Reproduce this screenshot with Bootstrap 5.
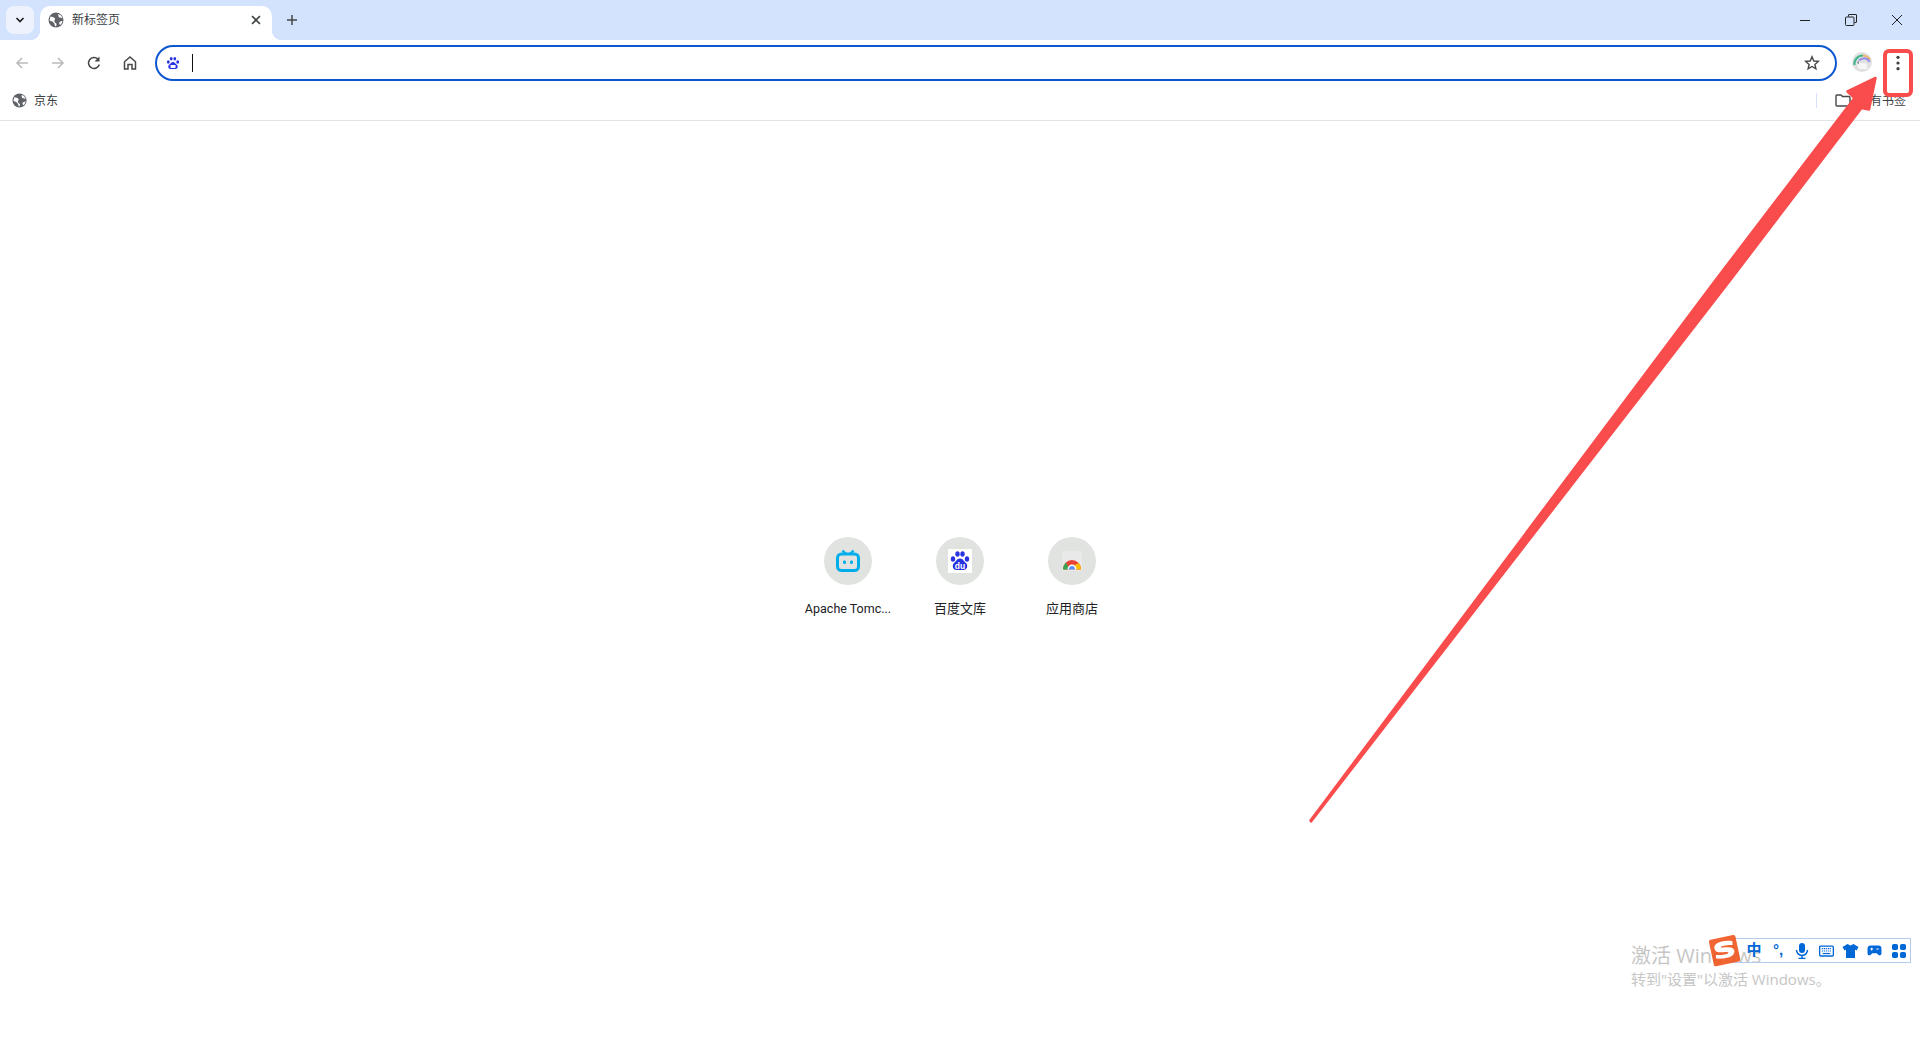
<!DOCTYPE html>
<html lang="zh">
<head>
<meta charset="utf-8">
<title>新标签页</title>
<link href="https://cdn.jsdelivr.net/npm/bootstrap@5.3.0/dist/css/bootstrap.min.css" rel="stylesheet">
<style>
html,body{height:100%;}
body{margin:0;background:#fff;overflow:hidden;font-family:"Liberation Sans","Noto Sans CJK SC",sans-serif;position:relative;}
.tabstrip{height:40px;background:#d3e3fd;padding-left:6px;}
.tabmenu{width:28px;height:28px;border-radius:8px;background:#edf2fc;margin-top:6px;}
.tabitem{width:232px;height:34px;margin-top:6px;margin-left:6px;background:#fff;border-radius:10px 10px 0 0;position:relative;padding:0 8px 6px 8px;font-size:12px;color:#3c4043;}
.tabitem::before,.tabitem::after{content:"";position:absolute;bottom:0;width:10px;height:10px;}
.tabitem::before{left:-10px;background:radial-gradient(circle at 0 0,transparent 10px,#fff 10.5px);}
.tabitem::after{right:-10px;background:radial-gradient(circle at 100% 0,transparent 10px,#fff 10.5px);}
.tabtitle{margin-left:8px;}
.plusbtn{margin-left:6px;margin-top:6px;width:28px;height:28px;}
.winbtns{margin-left:auto;}
.winbtn{width:46px;height:40px;}
.toolbar{height:45px;background:#fff;border-radius:10px 10px 0 0;padding-left:4px;}
.navbtn{width:36px;height:36px;}
.omnibox{width:1682px;height:36px;margin-left:7px;border:2.5px solid #0b57d0;border-radius:18px;padding:0 15px 0 9px;flex:none;}
.caretbar{width:1px;height:18px;background:#111;margin-left:12px;}
.avatarbox{margin-left:15px;margin-bottom:2px;line-height:0;}
.dotsbox{margin-left:18px;line-height:0;}
.bookmarks{height:36px;border-bottom:1px solid #e1e3e6;padding:0 14px 4px 12px;font-size:12px;color:#3c4043;}
.bmsep{width:1px;height:15px;background:#d6e2f8;margin-left:auto;margin-right:18px;}
.bmlabel{margin-left:7px;}
.ntpmain{height:879px;position:relative;}
.tiles{padding-top:416px;}
.tiletile{width:112px;}
.tilecircle{width:48px;height:48px;border-radius:50%;background:#e1e3e1;}
.tilelabel{font-family:Roboto,"Noto Sans CJK SC",sans-serif;font-size:13px;color:#202124;margin-top:15px;line-height:18px;text-align:center;}
.tilelatin{font-size:12.5px;}
.arrowlayer{position:absolute;left:0;top:0;pointer-events:none;}
.redbox{position:absolute;left:1883px;top:49px;width:30px;height:48px;border:4px solid #f94c4c;border-radius:6px;}
.wm{position:absolute;left:1631px;top:946px;color:#c6c6c6;line-height:1;font-family:"Open Sans","Noto Sans CJK SC",sans-serif;}
.wm1{font-size:20px;}
.wm2{font-size:15px;margin-top:6px;}
.imebar{position:absolute;left:1733px;top:938px;width:178px;height:25px;border:1px solid #b4cbee;padding-left:8px;}
.imecell{width:24.1px;height:23px;color:#0067d6;font-size:15px;font-weight:700;flex:none;}
.imelogo{position:absolute;left:1708px;top:932px;opacity:.93;}
</style>
</head>
<body>
<div class="tabstrip d-flex">
  <div class="tabmenu d-flex align-items-center justify-content-center">
    <svg width="12" height="12" viewBox="0 0 12 12"><path d="M2.500 4l3.500 3.600L9.500 4" fill="none" stroke="#202124" stroke-width="1.700"/></svg>
  </div>
  <div class="tabitem d-flex align-items-center">
    <svg width="16" height="16" viewBox="0 0 16 16"><circle cx="8" cy="8" r="7.500" fill="#5f6368"/><path d="M2.500 4.500C4 5 6.500 5 7 6.500S5.500 8.500 6.500 10s2 1 2 2.500-.5 1.500-1 2c-1-1.500-1-3-2-4S3 9 1.500 8.500zM10.500 2c-.5 1.500 0 3 1 3.500s2 0 3 1c-.3-2-2-4-4-4.500zM11.500 10c1-.7 2-1 3-1-.3 1.500-1 3-2.500 4-.7-1-1-2.200-.5-3z" fill="#fff"/></svg>
    <span class="tabtitle flex-grow-1">新标签页</span>
    <svg width="16" height="16" viewBox="0 0 16 16"><path d="M4 4l8 8M12 4l-8 8" stroke="#3c4043" stroke-width="1.600"/></svg>
  </div>
  <div class="plusbtn d-flex align-items-center justify-content-center">
    <svg width="14" height="14" viewBox="0 0 14 14"><path d="M7 2v10M2 7h10" stroke="#474747" stroke-width="1.500"/></svg>
  </div>
  <div class="winbtns d-flex">
    <div class="winbtn d-flex align-items-center justify-content-center"><svg width="12" height="12" viewBox="0 0 12 12"><path d="M1 6.500h10" stroke="#222" stroke-width="1"/></svg></div>
    <div class="winbtn d-flex align-items-center justify-content-center"><svg width="12" height="12" viewBox="0 0 12 12"><path d="M3.500 2.500V1a.5.5 0 0 1 .5-.5h7a.5.5 0 0 1 .5.500v7a.5.5 0 0 1-.5.500H9.500" fill="none" stroke="#222"/><rect x=".5" y="3" width="8.500" height="8.500" rx="1" fill="none" stroke="#222"/></svg></div>
    <div class="winbtn d-flex align-items-center justify-content-center"><svg width="12" height="12" viewBox="0 0 12 12"><path d="M1 1l10 10M11 1L1 11" stroke="#222" stroke-width="1"/></svg></div>
  </div>
</div>
<div class="toolbar d-flex align-items-center">
  <div class="navbtn d-flex align-items-center justify-content-center"><svg width="16" height="16" viewBox="0 0 16 16"><path d="M14 8H3M8 3L3 8l5 5" fill="none" stroke="#b9babb" stroke-width="1.500"/></svg></div>
  <div class="navbtn d-flex align-items-center justify-content-center"><svg width="16" height="16" viewBox="0 0 16 16"><path d="M2 8h11M8 3l5 5-5 5" fill="none" stroke="#b9babb" stroke-width="1.500"/></svg></div>
  <div class="navbtn d-flex align-items-center justify-content-center"><svg width="16" height="16" viewBox="0 0 16 16"><path d="M13.300 9.500A5.500 5.500 0 1 1 12 4.200" fill="none" stroke="#474747" stroke-width="1.500"/><path d="M13.500 1.500v5h-5z" fill="#474747"/></svg></div>
  <div class="navbtn d-flex align-items-center justify-content-center"><svg width="16" height="16" viewBox="0 0 16 16"><path d="M2.500 14V6.800L8 2l5.500 4.800V14H10V9.500H6V14z" fill="none" stroke="#474747" stroke-width="1.500"/></svg></div>
  <div class="omnibox d-flex align-items-center">
    <svg width="14" height="14" viewBox="0 0 14 14"><g fill="#2932e1"><ellipse cx="2.300" cy="6" rx="1.400" ry="1.700"/><ellipse cx="5.200" cy="2.700" rx="1.400" ry="1.800"/><ellipse cx="8.800" cy="2.700" rx="1.400" ry="1.800"/><ellipse cx="11.700" cy="6" rx="1.400" ry="1.700"/><path d="M7 6c2 0 2.500 2 4 3 1.500 1.500.5 4-1.500 4H4.500c-2 0-3-2.500-1.500-4C4.500 8 5 6 7 6z"/></g><rect x="4.500" y="9" width="5" height="3" fill="#fff"/></svg>
    <div class="caretbar"></div>
    <svg class="ms-auto" width="16" height="16" viewBox="0 0 16 16"><path d="M8 1.800l1.800 4.200 4.500.4-3.400 3 1 4.400L8 11.500l-3.900 2.300 1-4.400-3.400-3 4.500-.4z" fill="none" stroke="#474747" stroke-width="1.400"/></svg>
  </div>
  <div class="avatarbox">
    <svg width="20" height="20" viewBox="0 0 20 20"><circle cx="10" cy="10" r="10" fill="#dfe1e2"/><g fill="none" stroke-width="2.200"><path d="M2.500 13A8.500 8.500 0 0 1 11 3.500" stroke="#45b58a"/><path d="M11 3.500A8.500 8.500 0 0 1 18 8" stroke="#efb46e"/><path d="M6 12A6 6 0 0 1 17.500 10" stroke="#9a93e6"/></g><path d="M4 10l3-2 1.500 3 6 .5 1 5.500H7z" fill="#f6f6f6"/><path d="M4.500 10.500l2.500-2v4z" fill="#8d9a9c"/></svg>
  </div>
  <div class="dotsbox">
    <svg width="16" height="16" viewBox="0 0 16 16"><g fill="#3c4043"><circle cx="8" cy="2.300" r="1.600"/><circle cx="8" cy="8" r="1.600"/><circle cx="8" cy="13.700" r="1.600"/></g></svg>
  </div>
</div>
<div class="bookmarks d-flex align-items-center">
  <svg width="15" height="15" viewBox="0 0 16 16"><circle cx="8" cy="8" r="7.500" fill="#5f6368"/><path d="M2.500 4.500C4 5 6.500 5 7 6.500S5.500 8.500 6.500 10s2 1 2 2.500-.5 1.500-1 2c-1-1.500-1-3-2-4S3 9 1.500 8.500zM10.500 2c-.5 1.500 0 3 1 3.500s2 0 3 1c-.3-2-2-4-4-4.500zM11.500 10c1-.7 2-1 3-1-.3 1.500-1 3-2.500 4-.7-1-1-2.200-.5-3z" fill="#fff"/></svg>
  <span class="bmlabel">京东</span>
  <div class="bmsep"></div>
  <svg width="16" height="13" viewBox="0 0 16 13"><path d="M1 11V2A1 1 0 0 1 2 1h4l1.500 1.500H14a1 1 0 0 1 1 1V11a1 1 0 0 1-1 1H2a1 1 0 0 1-1-1z" fill="none" stroke="#474747" stroke-width="1.400"/></svg>
  <span class="bmlabel">所有书签</span>
</div>
<main class="ntpmain">
  <div class="tiles d-flex justify-content-center">
    <div class="tiletile d-flex flex-column align-items-center">
      <div class="tilecircle d-flex align-items-center justify-content-center">
        <svg width="24" height="24" viewBox="0 0 24 24"><path d="M6.500 1.500l3.500 3.500M17.500 1.500L14 5" stroke="#00aeec" stroke-width="2.400"/><rect x="1.500" y="5" width="21" height="16.500" rx="4" fill="none" stroke="#00aeec" stroke-width="3"/><rect x="7" y="11.500" width="3" height="3.500" rx="1.200" fill="#00aeec"/><rect x="14" y="11.500" width="3" height="3.500" rx="1.200" fill="#00aeec"/></svg>
      </div>
      <div class="tilelabel tilelatin">Apache Tomc...</div>
    </div>
    <div class="tiletile d-flex flex-column align-items-center">
      <div class="tilecircle d-flex align-items-center justify-content-center">
        <svg width="24" height="24" viewBox="0 0 24 24"><rect width="24" height="24" rx="1" fill="#fff"/><g fill="#2932e1"><ellipse cx="5" cy="10" rx="2.200" ry="2.700"/><ellipse cx="9.500" cy="5" rx="2.200" ry="2.800"/><ellipse cx="14.500" cy="5" rx="2.200" ry="2.800"/><ellipse cx="19" cy="10" rx="2.200" ry="2.700"/><path d="M12 9.500c3 0 4 3 6 4.500 2.500 2.500 1 7-2.500 7h-7C5 21 3.500 16.500 6 14c2-1.500 3-4.500 6-4.500z"/></g><text x="12" y="20" font-size="8.500" font-weight="700" text-anchor="middle" fill="#fff" font-family="Liberation Sans">du</text></svg>
      </div>
      <div class="tilelabel">百度文库</div>
    </div>
    <div class="tiletile d-flex flex-column align-items-center">
      <div class="tilecircle d-flex align-items-center justify-content-center">
        <svg width="24" height="24" viewBox="0 0 24 24"><path d="M2 2h20v20H2z" fill="#e9e9e9"/><path d="M3 20.500a9 9.500 0 0 1 18 0z" fill="#ea4335"/><path d="M3 20.500a9 9.500 0 0 1 3-7l3.500 7z" fill="#34a853"/><path d="M21 20.500a9 9.500 0 0 0-2-6.500l-4.500 2 .5 4.500z" fill="#fbbc05"/><path d="M7.500 20.500a4.500 5 0 0 1 9 0z" fill="#fff"/><path d="M9 20.500a3 3.500 0 0 1 6 0z" fill="#5b8df0"/></svg>
      </div>
      <div class="tilelabel">应用商店</div>
    </div>
  </div>
</main>
<svg class="arrowlayer" width="1920" height="1040" viewBox="0 0 1920 1040">
  <path d="M1310.500 820.500L1311 821.500L1730.400 280L1861.500 108L1869 109.500L1875.500 78L1847.500 91.500L1854.500 98L1715.600 280Z" fill="#f94c4c" stroke="#f94c4c" stroke-width="2.500" stroke-linejoin="round"/>
</svg>
<div class="redbox"></div>
<div class="wm"><div class="wm1">激活 Windows</div><div class="wm2">转到"设置"以激活 Windows。</div></div>
<div class="imebar d-flex align-items-center">
  <div class="imecell d-flex align-items-center justify-content-center">中</div>
  <div class="imecell d-flex align-items-center justify-content-center">°,</div>
  <div class="imecell d-flex align-items-center justify-content-center"><svg width="14" height="16" viewBox="0 0 14 16"><rect x="4" y="0" width="6" height="10" rx="3" fill="#0067d6"/><path d="M1.500 7a5.500 5.500 0 0 0 11 0M7 12.500V16M3.500 15.500h7" fill="none" stroke="#0067d6" stroke-width="1.500"/></svg></div>
  <div class="imecell d-flex align-items-center justify-content-center"><svg width="15" height="12" viewBox="0 0 16 12"><rect x=".7" y=".7" width="14.600" height="10.600" rx="1" fill="none" stroke="#0067d6" stroke-width="1.400"/><path d="M3 3.500h10M3 6h10" stroke="#0067d6" stroke-width="1.300" stroke-dasharray="1.300 .8"/><path d="M4 8.700h8" stroke="#0067d6" stroke-width="1.300"/></svg></div>
  <div class="imecell d-flex align-items-center justify-content-center"><svg width="17" height="14" viewBox="0 0 16 14"><path d="M5 0l3 1.500L11 0l5 3-2 3.500-1.500-1V14h-9V5.500L2 6.500 0 3z" fill="#0067d6"/></svg></div>
  <div class="imecell d-flex align-items-center justify-content-center"><svg width="15" height="13" viewBox="0 0 16 14"><path d="M4 1.500h8a3.500 3.500 0 0 1 3.500 3.500v5.500a2 2 0 0 1-3.500 1L10.500 10h-5L4 11.500a2 2 0 0 1-3.500-1V5A3.500 3.500 0 0 1 4 1.500z" fill="#0067d6"/><path d="M3.500 5.500h3M5 4v3M10 5.500h2.500" stroke="#fff" stroke-width="1.100"/></svg></div>
  <div class="imecell d-flex align-items-center justify-content-center"><svg width="14" height="14" viewBox="0 0 14 14"><g fill="#0067d6"><rect width="6" height="6" rx="1.800"/><rect x="8" width="6" height="6" rx="1.800"/><rect y="8" width="6" height="6" rx="1.800"/><rect x="8" y="8" width="6" height="6" rx="1.800"/></g></svg></div>
</div>
<svg class="imelogo" width="34" height="36" viewBox="0 0 34 36"><g transform="rotate(-12 17 18)"><rect x="3" y="5" width="27" height="27" rx="2" fill="#f15a24"/><path d="M26 11c-3-1.300-6.500-2-10.500-2C11 9 7 10.500 7 14.500s4 5 9.500 5.500c3 .3 3.500 1 3 1.500-.8 1-7 1-12.500-.5l-.5 3.500c5 1.500 9.500 2 13 1.500 4-.5 6.500-2.500 6.500-5.500s-2.500-4.500-8-5c-3.500-.4-4.500-.6-4.500-1.200 0-1 6-1 12 .5z" fill="#fff"/></g></svg>
</body>
</html>
